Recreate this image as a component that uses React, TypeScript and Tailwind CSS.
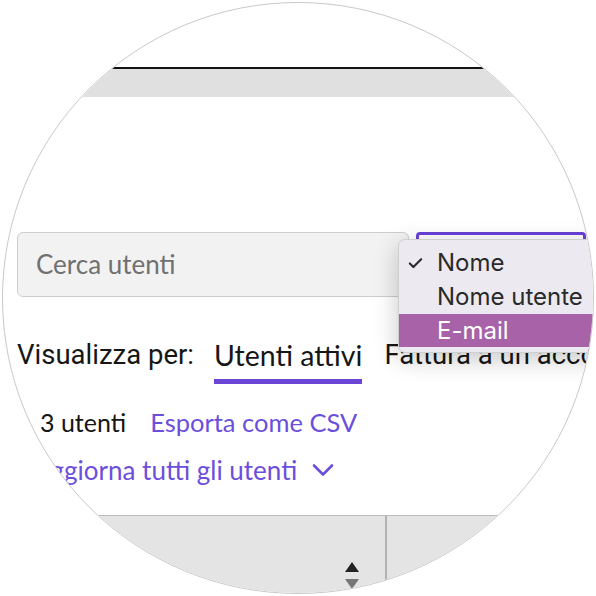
import { Check } from 'lucide-react';

export default function App() {
  return (
    <div className="w-[596px] h-[596px] bg-white p-[2px]">
      <div className="relative w-[592px] h-[592px] rounded-full border border-[#c9c9c9] overflow-hidden bg-white font-['Lato',sans-serif]">
        <div className="pt-[64px]">
          <div className="h-[2px] bg-[#141414]" />
          <div className="h-[28px] bg-[#e0e0e0]" />

          {/* search + select */}
          <div className="mt-[135px] flex pl-[14px]">
            <div className="w-[392px] h-[65px] shrink-0 rounded-[6px] border border-[#cdcdcd] bg-[#f2f2f2] flex items-center pl-[18px] text-[26px] text-[#707070]">
              Cerca utenti
            </div>
            <div className="ml-[7px] w-[170px] h-[65px] shrink-0 rounded-[4px] border-[3px] border-[#6a42d8] bg-white" />
          </div>

          {/* view by tabs */}
          <div className="mt-[41px] flex items-start pl-[14px] leading-[34px] text-[#161616] whitespace-nowrap">
            <span className="font-['Roboto',sans-serif] text-[27.5px]">Visualizza per:</span>
            <span className="ml-[20px] text-[28.5px] pb-[7px] border-b-[5px] border-[#6b45d6]">Utenti attivi</span>
            <span className="ml-[22px] font-['Roboto',sans-serif] text-[27.5px]">Fattura a un account</span>
          </div>

          {/* count + export */}
          <div className="mt-[23px] flex pl-[37px] leading-[30px] whitespace-nowrap">
            <span className="text-[#161616] text-[25px]">3 utenti</span>
            <span className="ml-[24px] text-[#6b4fdc] text-[25.5px]">Esporta come CSV</span>
          </div>

          {/* bulk update */}
          <div className="mt-[18px] flex items-center pl-[30px] text-[26px] leading-[30px] text-[#6b4fdc] whitespace-nowrap">
            <span>Aggiorna tutti gli utenti</span>
            <svg className="ml-[15px]" width="22" height="14" viewBox="0 0 22 14" fill="none">
              <path d="M2 2.5l9 9 9-9" stroke="#6b4fdc" strokeWidth="2.6" strokeLinecap="round" strokeLinejoin="round" />
            </svg>
          </div>

          {/* table header */}
          <div className="mt-[30px] h-[120px] flex border-t border-[#bcbcbc] bg-[#e4e4e4]">
            <div className="w-[382px] shrink-0 flex justify-end pr-[26px] pt-[46px]">
              <div className="flex flex-col items-center gap-[7px]">
                <svg width="14" height="10" viewBox="0 0 14 10">
                  <path d="M7 0L14 10H0z" fill="#222" />
                </svg>
                <svg width="14" height="10" viewBox="0 0 14 10">
                  <path d="M0 0h14L7 10z" fill="#777" />
                </svg>
              </div>
            </div>
            <div className="w-[2px] bg-[#b3b3b3]" />
            <div className="flex-1" />
          </div>
        </div>

        {/* native select popup */}
        <div className="absolute left-[395px] top-[236px] w-[230px] h-[114px] rounded-[7px] border border-[#cfcfcf] bg-[#ece9f0] shadow-[0_6px_24px_rgba(0,0,0,0.22)] pt-[6px] font-['Inter',sans-serif] text-[24px] text-[#2a2a2a]">
          <div className="h-[34px] flex items-center">
            <Check className="ml-[8px] w-[17px] h-[17px]" strokeWidth={3} />
            <span className="ml-[13px]">Nome</span>
          </div>
          <div className="h-[34px] flex items-center pl-[38px]">Nome utente</div>
          <div className="h-[33px] flex items-center pl-[38px] bg-[#a862a8] text-white">E-mail</div>
        </div>
      </div>
    </div>
  );
}
